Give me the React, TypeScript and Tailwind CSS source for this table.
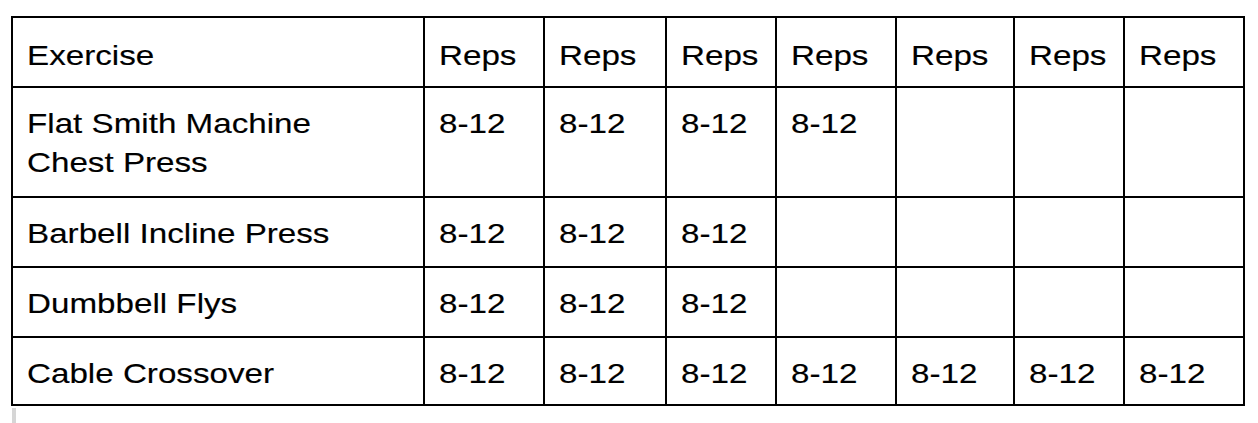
const HEADERS = ["Exercise", "Reps", "Reps", "Reps", "Reps", "Reps", "Reps", "Reps"];

const ROWS: { name: string; reps: number }[] = [
  { name: "Flat Smith Machine Chest Press", reps: 4 },
  { name: "Barbell Incline Press", reps: 3 },
  { name: "Dumbbell Flys", reps: 3 },
  { name: "Cable Crossover", reps: 7 },
];

function Cell({ children, first }: { children?: React.ReactNode; first?: boolean }) {
  return (
    <div
      className={`border-r-2 border-b-2 border-black px-[14px] ${first ? "pt-[18px]" : "pt-[16px]"} text-[28px] leading-[39px] text-black`}
    >
      {/* the glyphs in the shot are drawn about 1.18x wider and a touch heavier than plain Arial */}
      <span className="inline-block origin-left scale-x-[1.185] whitespace-nowrap [-webkit-text-stroke:0.15px_#000]">
        {children}
      </span>
    </div>
  );
}

export default function App() {
  return (
    <div
      className="min-h-[423px] w-[1258px] bg-white pl-[11px] pt-[16px]"
      style={{ fontFamily: '"Liberation Sans", Arial, sans-serif' }}
    >
      <div className="grid w-fit grid-cols-[412px_120px_122px_110px_120px_118px_110px_120px] grid-rows-[70px_110px_70px_70px_68px] border-l-2 border-t-2 border-black">
        {HEADERS.map((h, i) => (
          <Cell key={`h${i}`} first>
            {h}
          </Cell>
        ))}
        {ROWS.map((row) => (
          <>
            <Cell key={row.name}>
              {row.name === "Flat Smith Machine Chest Press" ? (
                <>
                  Flat Smith Machine
                  <br />
                  Chest Press
                </>
              ) : (
                row.name
              )}
            </Cell>
            {Array.from({ length: 7 }, (_, i) => (
              <Cell key={`${row.name}-${i}`}>{i < row.reps ? "8-12" : ""}</Cell>
            ))}
          </>
        ))}
      </div>
      <div className="ml-[1px] mt-[2px] h-[15px] w-[4px] bg-[#d6d6d6]" />
    </div>
  );
}
